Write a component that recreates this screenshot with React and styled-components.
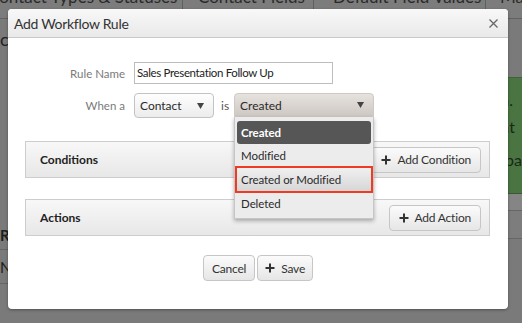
import React from "react";
import styled, { createGlobalStyle } from "styled-components";

const Global = createGlobalStyle`
  html, body { margin: 0; padding: 0; }
  body {
    width: 522px; height: 323px; overflow: hidden;
    background: #7a7a7a;
    font-family: Lato, "Open Sans", sans-serif;
  }
  #root { height: 323px; }
`;

/* ---------- dimmed page behind the dialog ---------- */
const Page = styled.div`
  position: relative;
  width: 522px;
  height: 334px;
  margin-top: -11px;
  display: flex;
  flex-direction: column;
  overflow: hidden;
  background: #7a7a7a;
`;

const TabBar = styled.div`
  display: flex;
  align-items: stretch;
  height: 29px;
  border-bottom: 1px solid #626262;
  background: #7c7c7c;
  overflow: hidden;
  flex-shrink: 0;
`;

const Tab = styled.div`
  flex: 0 0 ${(p) => p.$w}px;
  box-sizing: border-box;
  padding: 1px 0 0 ${(p) => p.$pad}px;
  line-height: 14px;
  font-size: 17px;
  color: #2a2a2a;
  white-space: nowrap;
  border-right: 1px solid #5f5f5f;
  overflow: hidden;
`;

const Content = styled.div`
  flex: 1;
  display: flex;
`;

const Main = styled.div`
  flex: 1;
  min-width: 0;
  display: flex;
  flex-direction: column;
`;

const Heading = styled.div`
  box-sizing: border-box;
  padding-top: 9px;
  height: 40px;
  font-size: 18px;
  line-height: 22px;
  color: #222;
`;

const Spacer = styled.div`
  flex: 0 0 ${(p) => p.$h}px;
`;

const Row = styled.div`
  height: ${(p) => p.$h}px;
  box-sizing: border-box;
  display: flex;
  align-items: center;
  border-bottom: 1px solid #666;
  font-size: 15px;
  font-weight: ${(p) => (p.$bold ? 700 : 400)};
  color: #1e1e1e;
`;

const Aside = styled.div`
  flex: 0 0 14px;
  display: flex;
  flex-direction: column;
`;

const AlertBox = styled.div`
  margin-top: 58px;
  height: 117px;
  box-sizing: border-box;
  padding: 8px 0 0 1px;
  background: #4a7442;
  border-top: 1px solid #3f6338;
  border-bottom: 1px solid #3a5933;
  font-size: 16px;
  color: #1a2815;
  white-space: nowrap;
  overflow: hidden;
`;

const AlertLine = styled.div`
  line-height: 27px;
  margin-top: ${(p) => p.$gap || 0}px;
`;

const AsideStrip = styled.div`
  height: ${(p) => p.$h}px;
  border-bottom: 1px solid #666;
  background: ${(p) => p.$bg};
`;

/* ---------- dialog ---------- */
const Dialog = styled.div`
  position: absolute;
  left: 8px;
  top: 9px;
  width: 500px;
  height: 300px;
  box-sizing: border-box;
  background: #fff;
  border-radius: 4px;
  box-shadow: 0 1px 3px rgba(0, 0, 0, 0.35);
  display: flex;
  flex-direction: column;
`;

const Header = styled.div`
  height: 28px;
  flex-shrink: 0;
  display: flex;
  align-items: center;
  justify-content: space-between;
  padding: 0 10px 0 6px;
  border-bottom: 1px solid #c9c9c9;
  border-radius: 4px 4px 0 0;
  background: linear-gradient(#f8f8f8, #e9e9e9);
`;

const Title = styled.div`
  font-size: 14px;
  color: #333;
  letter-spacing: -0.3px;
`;

const Close = styled.button`
  border: 0;
  padding: 0;
  background: transparent;
  width: 10px;
  height: 10px;
  display: flex;
  align-items: center;
  justify-content: center;
`;

const Body = styled.div`
  flex: 1;
  display: flex;
  flex-direction: column;
  padding: 24px 0 0 0;
`;

const Form = styled.div`
  display: grid;
  grid-template-columns: 117px 1fr;
  column-gap: 9px;
  row-gap: 9px;
  align-items: center;
`;

const Label = styled.div`
  text-align: right;
  font-size: 11.5px;
  color: #7a7a7a;
`;

const TextInput = styled.div`
  width: 199px;
  height: 22px;
  box-sizing: border-box;
  border: 1px solid #bdbdbd;
  padding: 0 0 0 2px;
  font-size: 11.5px;
  letter-spacing: -0.35px;
  line-height: 20px;
  color: #222;
  white-space: nowrap;
`;

const WhenRow = styled.div`
  display: flex;
  align-items: center;
`;

const Select = styled.div`
  position: relative;
  width: ${(p) => p.$w}px;
  height: ${(p) => (p.$open ? 24 : 25)}px;
  box-sizing: border-box;
  display: flex;
  align-items: center;
  justify-content: space-between;
  padding: 0 9px 0 5px;
  font-size: 12px;
  color: #2a2a2a;
  border-radius: ${(p) => (p.$open ? "4px 4px 0 0" : "4px")};
  border: 1px solid ${(p) => (p.$open ? "#cfc9c4" : "#c3c3c3")};
  background: ${(p) =>
    p.$open
      ? "linear-gradient(#e6e2de, #cec8c3)"
      : "linear-gradient(#fefefe, #ececec)"};
  margin-top: ${(p) => (p.$open ? "-1px" : "0")};
`;

const IsText = styled.span`
  font-size: 12px;
  color: #555;
  margin: 0 5px 0 7px;
`;

const Menu = styled.ul`
  position: absolute;
  top: 23px;
  left: -1px;
  width: 140px;
  box-sizing: border-box;
  margin: 0;
  padding: 4px 2px 3px;
  list-style: none;
  background: #ececec;
  border: 1px solid #c6c6c6;
  border-top: 0;
  box-shadow: 0 2px 4px rgba(0, 0, 0, 0.3);
  z-index: 2;
`;

const Item = styled.li`
  height: 23px;
  box-sizing: border-box;
  display: flex;
  align-items: center;
  padding-left: 4px;
  font-size: 11.5px;
  letter-spacing: -0.1px;
  color: ${(p) => (p.$selected ? "#fff" : "#2a2a2a")};
  background: ${(p) =>
    p.$selected
      ? "#565656"
      : p.$hover
      ? "linear-gradient(#f0f0f0, #d6d6d6)"
      : "transparent"};
  border-radius: ${(p) => (p.$selected ? "3px" : "0")};
  font-weight: ${(p) => (p.$selected ? 700 : 400)};
  outline: ${(p) => (p.$hover ? "2px solid #ee3b22" : "none")};
  margin: ${(p) => (p.$hover ? "1px 0" : "0")};
`;

const Panel = styled.div`
  margin: ${(p) => p.$top}px 18px 0 17px;
  height: 37px;
  box-sizing: border-box;
  display: flex;
  align-items: center;
  justify-content: space-between;
  padding: 0 8px 0 14px;
  border: 1px solid #cdcdcd;
  background: linear-gradient(#f8f8f8, #e7e7e7);
`;

const PanelTitle = styled.div`
  font-size: 12px;
  font-weight: 700;
  color: #222;
`;

const Button = styled.button`
  height: 26px;
  box-sizing: border-box;
  display: inline-flex;
  align-items: center;
  gap: 6px;
  padding: 0 ${(p) => p.$px || 9}px;
  border: 1px solid #c6c6c6;
  border-radius: 4px;
  background: linear-gradient(#fbfbfb, #e6e6e6);
  font-family: inherit;
  font-size: 12px;
  letter-spacing: -0.2px;
  color: #333;
  cursor: pointer;
`;

const Footer = styled.div`
  margin-top: 19px;
  display: flex;
  justify-content: center;
  gap: 2px;
`;

const Arrow = () => (
  <svg width="7" height="6" viewBox="0 0 7 6">
    <path d="M0 0 H7 L3.5 6 Z" fill="#444" />
  </svg>
);

const Plus = () => (
  <svg width="10" height="10" viewBox="0 0 10 10">
    <path d="M5 0.5 V9.5 M0.5 5 H9.5" stroke="#333" strokeWidth="2" />
  </svg>
);

export default function App() {
  return (
    <>
      <Global />
      <Page>
        <TabBar>
          <Tab $w={183} $pad={0} style={{ textIndent: "-12px" }}>
            Contact Types &amp; Statuses
          </Tab>
          <Tab $w={131} $pad={15}>Contact Fields</Tab>
          <Tab $w={172} $pad={19}>Default Field Values</Tab>
          <Tab $w={60} $pad={14}>Mail</Tab>
        </TabBar>
        <Content>
          <Main>
            <Heading>contacts</Heading>
            <Spacer $h={161} />
            <Row $h={30} $bold>Rules</Row>
            <Row $h={34}>Name</Row>
          </Main>
          <Aside>
            <AlertBox>
              <AlertLine>a.</AlertLine>
              <AlertLine>at</AlertLine>
              <AlertLine $gap={6}>lba</AlertLine>
            </AlertBox>
            <AsideStrip $h={16} $bg="#858585" />
            <AsideStrip $h={27} $bg="#7d7d7d" />
          </Aside>
        </Content>
      </Page>

      <Dialog>
        <Header>
          <Title>Add Workflow Rule</Title>
          <Close aria-label="Close">
            <svg width="9" height="9" viewBox="0 0 9 9">
              <path
                d="M0.5 0.5 L8.5 8.5 M8.5 0.5 L0.5 8.5"
                stroke="#666"
                strokeWidth="1.3"
              />
            </svg>
          </Close>
        </Header>
        <Body>
          <Form>
            <Label>Rule Name</Label>
            <TextInput>Sales Presentation Follow Up</TextInput>
            <Label>When a</Label>
            <WhenRow>
              <Select $w={80}>
                Contact
                <Arrow />
              </Select>
              <IsText>is</IsText>
              <Select $w={140} $open>
                Created
                <Arrow />
                <Menu>
                  <Item $selected>Created</Item>
                  <Item>Modified</Item>
                  <Item $hover>Created or Modified</Item>
                  <Item>Deleted</Item>
                </Menu>
              </Select>
            </WhenRow>
          </Form>
          <Panel $top={23}>
            <PanelTitle>Conditions</PanelTitle>
            <Button>
              <Plus />
              Add Condition
            </Button>
          </Panel>
          <Panel $top={21}>
            <PanelTitle>Actions</PanelTitle>
            <Button>
              <Plus />
              Add Action
            </Button>
          </Panel>
          <Footer>
            <Button $px={8}>Cancel</Button>
            <Button $px={7}>
              <Plus />
              Save
            </Button>
          </Footer>
        </Body>
      </Dialog>
    </>
  );
}
